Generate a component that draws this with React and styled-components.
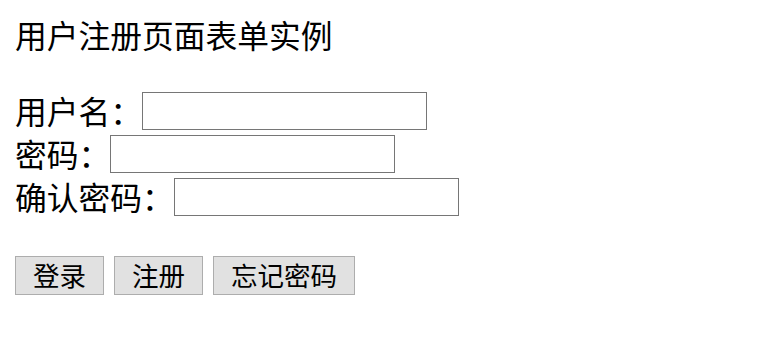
import React from "react";
import styled, { createGlobalStyle } from "styled-components";

const GlobalStyle = createGlobalStyle`
  html, body {
    margin: 0;
    padding: 0;
    background: #ffffff;
  }
  body {
    font-family: "Noto Sans CJK SC", "Noto Sans", sans-serif;
    color: #000000;
  }
`;

const Page = styled.div`
  padding: 15px 0 0 15px;
`;

const Title = styled.h1`
  margin: 0;
  height: 38px;
  display: flex;
  align-items: center;
  font-size: 31.75px;
  font-weight: normal;
  white-space: nowrap;
`;

const Form = styled.form`
  margin-top: 39px;
  display: flex;
  flex-direction: column;
  gap: 5px;
`;

const Row = styled.div`
  display: flex;
  align-items: center;
  height: 38px;
`;

const Label = styled.label`
  font-size: 31.75px;
  line-height: 34px;
  padding-bottom: 3px;
  white-space: nowrap;
`;

const Input = styled.input`
  box-sizing: border-box;
  width: 285px;
  height: 38px;
  margin: 0;
  padding: 0 4px;
  border: 1px solid #767676;
  border-radius: 0;
  background: #ffffff;
  font-size: 20px;
  outline: none;
`;

const Buttons = styled.div`
  display: flex;
  gap: 10px;
  margin-top: 40px;
`;

const Button = styled.button`
  box-sizing: border-box;
  height: 39px;
  margin: 0;
  padding: 0 17px 2px;
  border: 1px solid #adadad;
  border-radius: 0;
  background: #e1e1e1;
  color: #000000;
  font-family: "Noto Sans CJK SC", sans-serif;
  font-size: 26.5px;
  line-height: 35px;
  cursor: pointer;
`;

const fields = [
  { id: "username", label: "用户名：", type: "text" },
  { id: "password", label: "密码：", type: "password" },
  { id: "confirm", label: "确认密码：", type: "password" },
];

export default function App() {
  return (
    <>
      <GlobalStyle />
      <Page>
        <Title>用户注册页面表单实例</Title>
        <Form onSubmit={(e) => e.preventDefault()}>
          {fields.map((f) => (
            <Row key={f.id}>
              <Label htmlFor={f.id}>{f.label}</Label>
              <Input id={f.id} type={f.type} />
            </Row>
          ))}
        </Form>
        <Buttons>
          <Button type="button">登录</Button>
          <Button type="button">注册</Button>
          <Button type="button">忘记密码</Button>
        </Buttons>
      </Page>
    </>
  );
}
